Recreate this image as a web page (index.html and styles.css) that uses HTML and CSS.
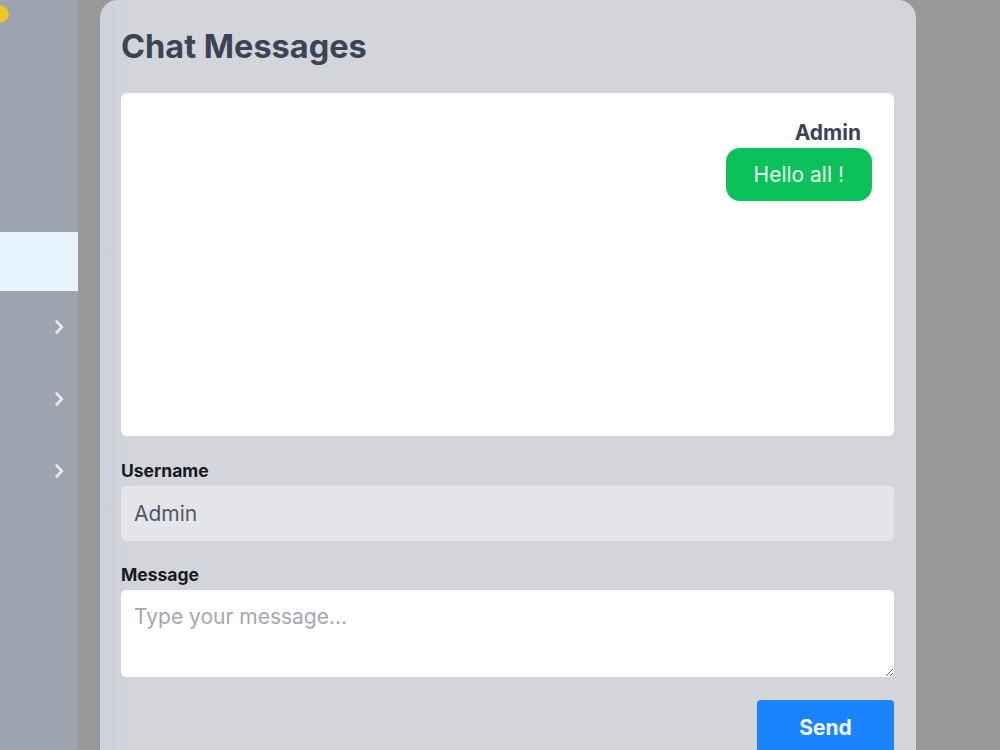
FILE: index.html
```html
<!DOCTYPE html>
<html lang="en">
<head>
<meta charset="utf-8">
<title>Chat Messages</title>
<link rel="stylesheet" href="styles.css">
</head>
<body>
<div class="app">
  <aside class="sidebar">
    <div class="side-top"><span class="dot"></span></div>
    <div class="side-item active"></div>
    <div class="side-item"><svg class="chev" viewBox="0 0 10 16" width="10" height="16"><path d="M2.5 2.5 L8 8 L2.5 13.5" fill="none" stroke="#e5e7eb" stroke-width="2.6" stroke-linecap="round" stroke-linejoin="round"/></svg></div>
    <div class="side-item"><svg class="chev" viewBox="0 0 10 16" width="10" height="16"><path d="M2.5 2.5 L8 8 L2.5 13.5" fill="none" stroke="#e5e7eb" stroke-width="2.6" stroke-linecap="round" stroke-linejoin="round"/></svg></div>
    <div class="side-item"><svg class="chev" viewBox="0 0 10 16" width="10" height="16"><path d="M2.5 2.5 L8 8 L2.5 13.5" fill="none" stroke="#e5e7eb" stroke-width="2.6" stroke-linecap="round" stroke-linejoin="round"/></svg></div>
  </aside>
  <main class="main">
    <section class="card">
      <h1 class="title">Chat Messages</h1>
      <div class="chat-box">
        <div class="msg">
          <div class="msg-name">Admin</div>
          <div class="bubble">Hello all !</div>
        </div>
      </div>
      <form class="form">
        <label class="label" for="username">Username</label>
        <input id="username" class="input" type="text" value="Admin" readonly>
        <label class="label label-msg" for="message">Message</label>
        <textarea id="message" class="textarea" placeholder="Type your message..."></textarea>
        <div class="actions"><button type="button" class="send">Send</button></div>
      </form>
    </section>
  </main>
</div>
</body>
</html>
```

FILE: styles.css
```css
html, body {
  margin: 0;
  padding: 0;
  height: 100%;
  overflow: hidden;
}
body {
  font-family: Inter, "Noto Sans", "Liberation Sans", sans-serif;
  background: #999999;
}
.app {
  display: flex;
  height: 100%;
}
.sidebar {
  width: 78px;
  flex: none;
  background: #9ca2ae;
  display: flex;
  flex-direction: column;
}
.side-top {
  height: 232px;
  padding-top: 5px;
  box-sizing: border-box;
}
.dot {
  display: block;
  width: 18px;
  height: 18px;
  border-radius: 50%;
  margin-left: -9px;
  background: radial-gradient(circle, #f6c814 0%, #f1c52a 55%, rgba(241,197,42,0) 100%);
}
.side-item {
  height: 72px;
  display: flex;
  align-items: center;
  justify-content: flex-end;
  padding-right: 14px;
}
.side-item.active {
  height: 59px;
  background: #e8f4fd;
}
.main {
  flex: 1;
  padding-left: 22px;
  padding-right: 84px;
}
.card {
  background: linear-gradient(90deg, #ccd1db 0px, #d3d5da 36px, #d4d5da 100%);
  border-radius: 18px 18px 0 0;
  padding: 27px 22px 30px 21px;
}
.title {
  margin: 0 0 26px;
  font-size: 32.5px;
  line-height: 40px;
  font-weight: 700;
  color: #3b4354;
}
.chat-box {
  background: #ffffff;
  border-radius: 6px;
  height: 343px;
  box-sizing: border-box;
  padding: 28px 22px 22px;
  display: flex;
  flex-direction: column;
  align-items: flex-end;
}
.msg {
  display: flex;
  flex-direction: column;
  align-items: flex-end;
}
.msg-name {
  font-size: 21px;
  line-height: 24px;
  font-weight: 700;
  color: #3b4354;
  margin-right: 11px;
  margin-bottom: 3px;
}
.bubble {
  background: #0bc25a;
  color: #eafff0;
  font-size: 21px;
  line-height: 25px;
  padding: 14px 28px;
  border-radius: 14px;
}
.form {
  display: flex;
  flex-direction: column;
  padding-top: 24px;
}
.label {
  font-size: 17.5px;
  line-height: 22px;
  font-weight: 700;
  color: #161a22;
  margin-bottom: 4px;
}
.label-msg {
  margin-top: 23px;
}
.input {
  height: 55px;
  box-sizing: border-box;
  border: none;
  border-radius: 5px;
  background: #e4e5e9;
  padding: 0 13px;
  font-family: inherit;
  font-size: 21px;
  color: #505869;
  outline: none;
}
.textarea {
  height: 87px;
  box-sizing: border-box;
  border: none;
  border-radius: 5px;
  background: #ffffff;
  padding: 14px 13px;
  font-family: inherit;
  font-size: 21px;
  color: #374151;
  outline: none;
  resize: vertical;
}
.textarea::placeholder {
  color: #a3a8b2;
}
.actions {
  display: flex;
  justify-content: flex-end;
  margin-top: 23px;
}
.send {
  width: 137px;
  height: 55px;
  border: none;
  border-radius: 4px;
  background: #1a84fd;
  color: #eef5ff;
  font-family: inherit;
  font-size: 21px;
  font-weight: 700;
}
```
